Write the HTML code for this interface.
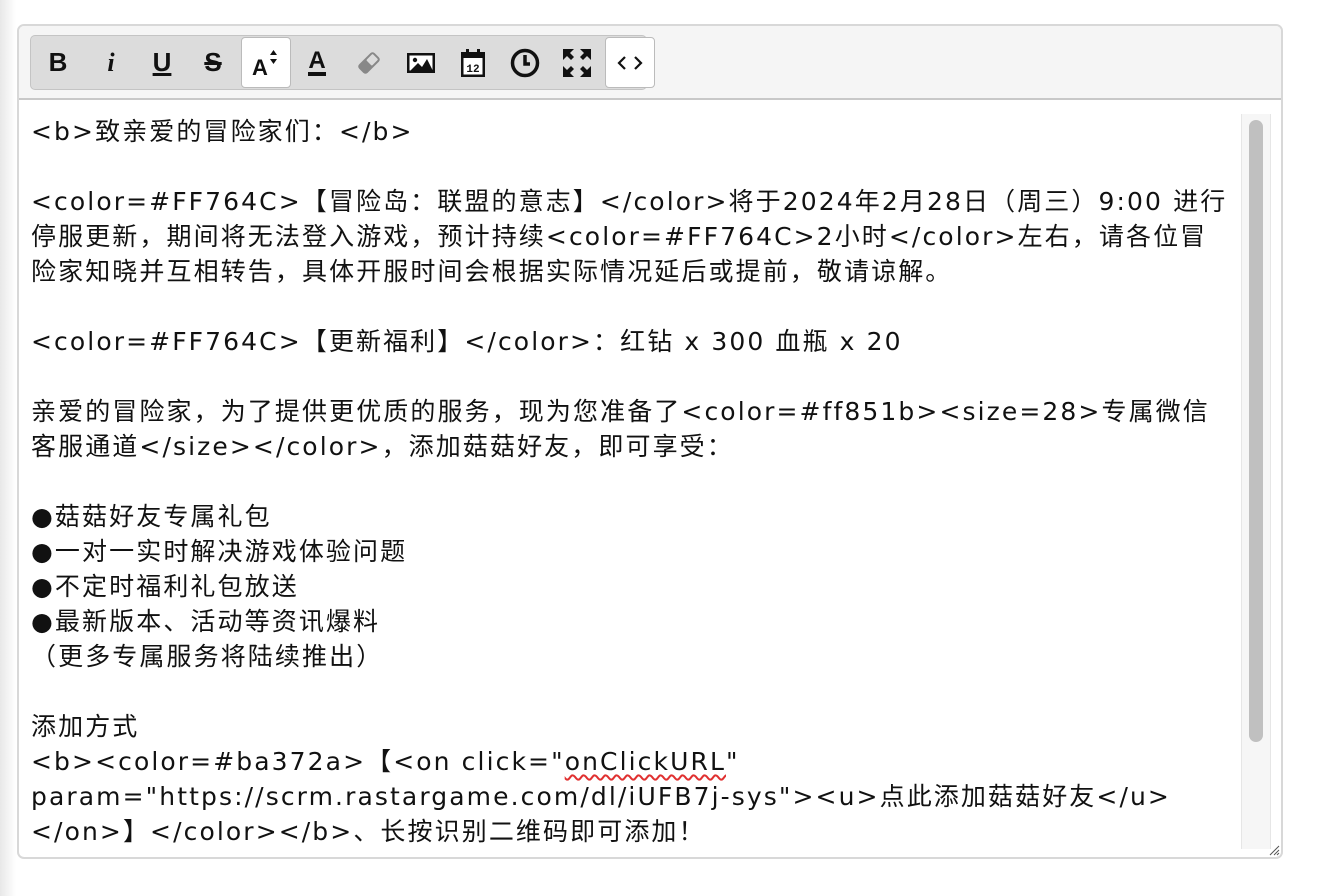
<!DOCTYPE html>
<html><head><meta charset="utf-8"><style>
html,body{margin:0;padding:0;width:1338px;height:896px;background:#fff;overflow:hidden;font-family:"Liberation Sans","Noto Sans CJK SC",sans-serif;}
.shade{position:absolute;left:0;top:0;width:16px;height:896px;background:linear-gradient(to right,#e8e8e8,#fff);}
.box{position:absolute;left:17px;top:24px;width:1262px;height:831px;border:2px solid #d8d8d8;border-radius:7px;background:#fff;overflow:hidden;}
.tb{position:absolute;left:0;top:0;width:1262px;height:72px;background:#f5f5f5;border-bottom:2px solid #c8c8c8;}
.grp{position:absolute;left:11px;top:9px;width:615px;height:53px;background:#dcdcdc;border:1px solid #c4c4c4;border-radius:5px;}
.btn{position:absolute;top:2px;width:48px;height:49px;display:flex;align-items:center;justify-content:center;font-size:26px;color:#111;font-weight:bold;}
.act{background:#fff;border:1px solid #bbb;border-radius:4px;top:1px;}
.content{position:absolute;left:12px;top:88px;width:1215px;font-family:"DejaVu Sans","Noto Sans CJK SC",sans-serif;font-size:25px;letter-spacing:2.1px;line-height:35px;color:#111;white-space:nowrap;}
.track{position:absolute;left:1222px;top:88px;width:28px;height:735px;background:#f6f6f6;border-left:1px solid #e6e6e6;border-right:1px solid #e6e6e6;}
.thumb{position:absolute;left:1230px;top:94px;width:14px;height:622px;background:#c0c0c0;border-radius:7px;}
.sq{text-decoration:underline wavy #e03030;text-underline-offset:4px;text-decoration-thickness:1.5px;}
</style></head><body>
<div class="shade"></div>
<div class="box">
 <div class="tb">
  <div class="grp">
   <div class="btn" style="left:3px">B</div>
   <div class="btn" style="left:56px;font-style:italic;font-weight:bold;font-family:'Liberation Serif',serif">i</div>
   <div class="btn" style="left:107px;text-decoration:underline;text-decoration-thickness:3px">U</div>
   <div class="btn" style="left:158px;text-decoration:line-through;text-decoration-thickness:3px">S</div>
   <div class="btn act" style="left:210px"><svg width="30" height="30" viewBox="0 0 30 30"><text x="1" y="27" font-size="22" font-weight="bold" font-family="Liberation Sans,sans-serif" fill="#111">A</text><path d="M19 7 L22.5 2 L26 7Z M19 11 L22.5 16 L26 11Z" fill="#111"/></svg></div>
   <div class="btn" style="left:262px;font-size:24px"><span style="border-bottom:4px solid #111;line-height:22px">A</span></div>
   <div class="btn" style="left:314px"><svg width="28" height="28" viewBox="0 0 28 28"><g transform="rotate(-45 14 14)"><rect x="3" y="8" width="22" height="12" rx="3" fill="#888"/><rect x="14" y="10" width="9" height="8" rx="1" fill="#dcdcdc"/></g></svg></div>
   <div class="btn" style="left:366px"><svg width="30" height="24" viewBox="0 0 30 24"><rect x="1" y="2" width="28" height="20" fill="#111"/><rect x="3.5" y="4.5" width="23" height="15" fill="#fff"/><circle cx="9" cy="9" r="2.2" fill="#111"/><path d="M4 20 L12 12 L16 16 L21 8 L27 20Z" fill="#111"/></svg></div>
   <div class="btn" style="left:418px"><svg width="28" height="30" viewBox="0 0 28 30"><rect x="2" y="4" width="24" height="25" fill="#111"/><rect x="4.5" y="10" width="19" height="16.5" fill="#fff"/><rect x="7" y="1" width="3" height="6" fill="#111"/><rect x="18" y="1" width="3" height="6" fill="#111"/><text x="14" y="24" font-size="11" font-family="Liberation Mono,monospace" font-weight="bold" text-anchor="middle" fill="#111">12</text></svg></div>
   <div class="btn" style="left:470px"><svg width="30" height="30" viewBox="0 0 30 30"><circle cx="15" cy="15" r="12.5" fill="none" stroke="#111" stroke-width="3.5"/><path d="M15 7 V16 H20" fill="none" stroke="#111" stroke-width="3.5"/></svg></div>
   <div class="btn" style="left:522px"><svg width="30" height="30" viewBox="0 0 30 30" fill="#111"><path d="M1 1h11l-4 4 4 4-3 3-4-4-4 4z"/><path d="M29 1h-11l4 4-4 4 3 3 4-4 4 4z"/><path d="M1 29h11l-4-4 4-4-3-3-4 4-4-4z"/><path d="M29 29h-11l4-4-4-4 3-3 4 4 4-4z"/></svg></div>
   <div class="btn act" style="left:574px"><svg width="30" height="20" viewBox="0 0 30 20"><path d="M10 4 L4 10 L10 16 M20 4 L26 10 L20 16" fill="none" stroke="#111" stroke-width="2.2"/></svg></div>
  </div>
 </div>
 <div class="content">
<div>&lt;b&gt;致亲爱的冒险家们：&lt;/b&gt;</div>
<div>&nbsp;</div>
<div>&lt;color=#FF764C&gt;【冒险岛：联盟的意志】&lt;/color&gt;将于2024年2月28日（周三）9:00 进行</div>
<div>停服更新，期间将无法登入游戏，预计持续&lt;color=#FF764C&gt;2小时&lt;/color&gt;左右，请各位冒</div>
<div>险家知晓并互相转告，具体开服时间会根据实际情况延后或提前，敬请谅解。</div>
<div>&nbsp;</div>
<div>&lt;color=#FF764C&gt;【更新福利】&lt;/color&gt;：红钻 x 300 血瓶 x 20</div>
<div>&nbsp;</div>
<div>亲爱的冒险家，为了提供更优质的服务，现为您准备了&lt;color=#ff851b&gt;&lt;size=28&gt;专属微信</div>
<div>客服通道&lt;/size&gt;&lt;/color&gt;，添加菇菇好友，即可享受：</div>
<div>&nbsp;</div>
<div>●菇菇好友专属礼包</div>
<div>●一对一实时解决游戏体验问题</div>
<div>●不定时福利礼包放送</div>
<div>●最新版本、活动等资讯爆料</div>
<div>（更多专属服务将陆续推出）</div>
<div>&nbsp;</div>
<div>添加方式</div>
<div>&lt;b&gt;&lt;color=#ba372a&gt;【&lt;on click="<span class="sq">onClickURL</span>"</div>
<div>param="https://scrm.rastargame.com/dl/iUFB7j-sys"&gt;&lt;u&gt;点此添加菇菇好友&lt;/u&gt;</div>
<div>&lt;/on&gt;】&lt;/color&gt;&lt;/b&gt;、长按识别二维码即可添加！</div>
 </div>
 <div class="track"></div>
 <div class="thumb"></div>
 <svg style="position:absolute;right:1px;bottom:1px" width="12" height="12" viewBox="0 0 12 12"><path d="M11 2L2 11M11 6L6 11M11 9L9 11" stroke="#555" stroke-width="1"/></svg>
</div>
</body></html>
